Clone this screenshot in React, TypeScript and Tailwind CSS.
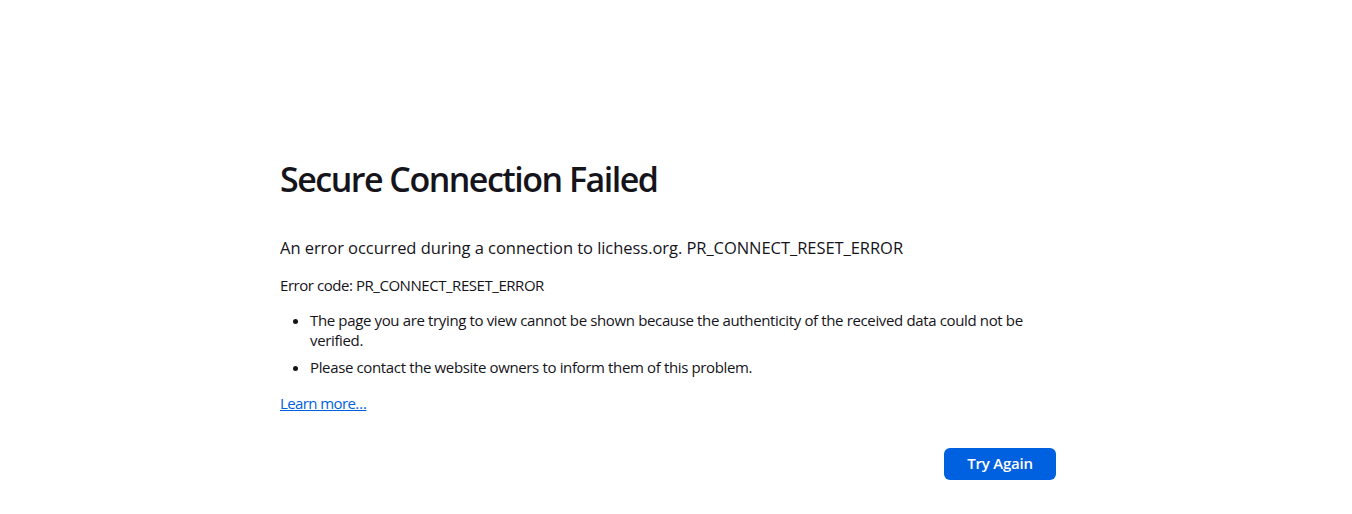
export default function App() {
  return (
    <main className="min-h-screen bg-white text-[#15141a] font-['Open_Sans',sans-serif]">
      <div className="ml-[280px] w-[776px] pt-[158px]">
        <h1 className="text-[34px] leading-[42px] font-semibold tracking-[-1.5px]">Secure Connection Failed</h1>
        <p className="mt-[37px] text-[16.5px] leading-[22px] tracking-[-0.05px]">
          An error occurred during a connection to lichess.org. PR_CONNECT_RESET_ERROR
        </p>
        <p className="mt-[16px] text-[15px] leading-[20px] tracking-[-0.45px]">Error code: PR_CONNECT_RESET_ERROR</p>
        <ul className="mt-[16px] list-disc pl-[30px] text-[15px] leading-[19.5px] tracking-[-0.36px] space-y-[8px]">
          <li>The page you are trying to view cannot be shown because the authenticity of the received data could not be verified.</li>
          <li>Please contact the website owners to inform them of this problem.</li>
        </ul>
        <p className="mt-[15px] text-[15px] leading-[20px] tracking-[-0.6px]">
          <a href="#" className="text-[#0061e0] underline">Learn more…</a>
        </p>
        <div className="mt-[35px] flex justify-end">
          <button className="h-[32px] w-[112px] rounded-[6px] bg-[#0061e0] text-white text-[15px] font-semibold tracking-[-0.2px]">
            Try Again
          </button>
        </div>
      </div>
    </main>
  );
}
